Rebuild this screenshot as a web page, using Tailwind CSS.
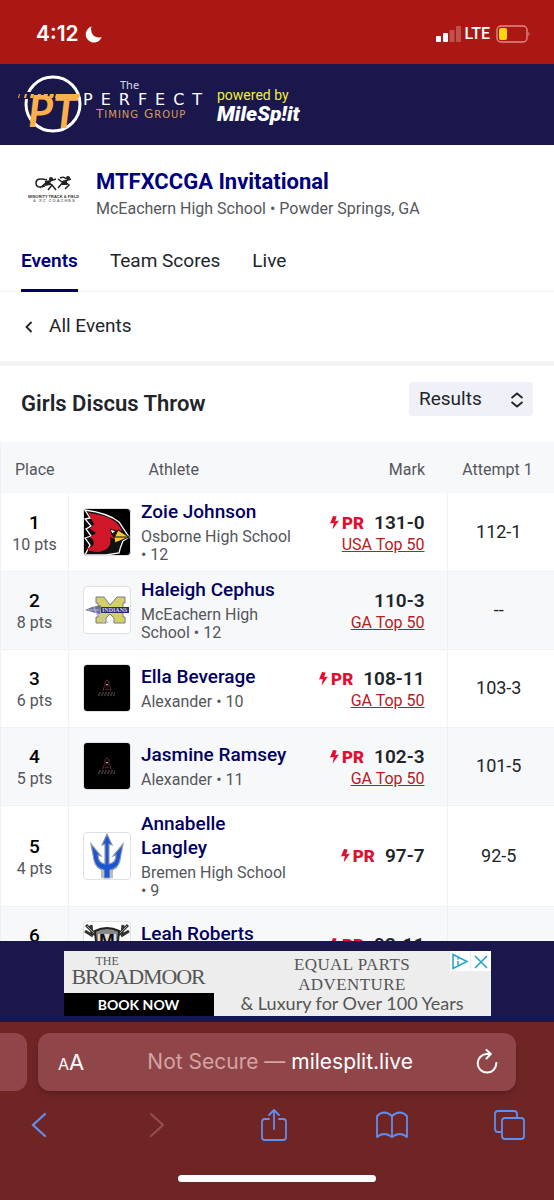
<!DOCTYPE html>
<html lang="en">
<head>
    <meta charset="UTF-8">
    <meta name="viewport" content="width=device-width, initial-scale=1.0">
    <title>Girls Discus Throw - MTFXCCGA Invitational</title>
    <script src="https://cdn.jsdelivr.net/npm/@tailwindcss/browser@4"></script>
</head>
<body class="flex h-screen flex-col overflow-hidden bg-white font-[Roboto,sans-serif] text-[#212529]">

    <!-- Shared icons -->
    <svg class="hidden">
        <symbol id="bolt" viewBox="0 0 9 14">
            <path d="M3 0L0 7.6L3.8 7L2.6 13.6L9 4.6L5.2 5.2L6.6 .4Z" fill="currentColor"/>
        </symbol>
        <symbol id="alexander" viewBox="0 0 46 46">
            <rect width="46" height="46" fill="#000"/>
            <path d="M21 22V17Q23 13 25 17V22M20 22L19 26M26 22L27 26M21 25Q23 23 25 25" fill="none" stroke="#6b2b35"/>
            <path d="M22 19l1 2 1-2z" fill="#ddd"/>
            <path d="M15 28H31M14 30H32" stroke="#4b3b3e" stroke-width="1.5" stroke-dasharray="2 1"/>
        </symbol>
    </svg>

    <!-- Status bar -->
    <div class="flex h-16 shrink-0 items-center justify-between bg-[#ab1813] pt-1 pr-6 pl-9 text-white">
        <div class="flex items-center gap-1.5">
            <span class="font-[Inter,sans-serif] text-[21px] font-semibold">4:12</span>
            <svg class="size-[17px]" viewBox="0 0 17 17"><path d="M6.500 .5A8.200 8.200 0 1 0 16.700 11Q12 12.500 8.500 9.500Q5 6 6.500 .5Z" fill="#fff"/></svg>
        </div>
        <div class="flex items-center gap-1">
            <svg class="h-4 w-[25px]" viewBox="0 0 25 16" fill="#fff">
                <rect y="10" width="5" height="6" rx="1"/>
                <rect x="7" y="7" width="5" height="9" rx="1"/>
                <rect x="13.500" y="4" width="5" height="12" rx="1" opacity=".25"/>
                <rect x="20" width="5" height="16" rx="1" opacity=".25"/>
            </svg>
            <span class="font-[Roboto,sans-serif] text-base leading-5 font-medium">LTE</span>
            <svg class="h-[18px] w-[36px]" viewBox="0 0 36 18">
                <rect x="3" y="1" width="30" height="16" rx="4" fill="none" stroke="#dd8a86" stroke-width="1.400"/>
                <rect x="5" y="3" width="8" height="12" rx="2" fill="#ffd60a"/>
                <path d="M34.500 6.500Q36.500 9 34.500 11.500Z" fill="#dd8a86"/>
            </svg>
        </div>
    </div>

    <!-- Brand header -->
    <header class="flex h-[81px] shrink-0 items-center bg-[#1a174d] pl-4">
        <svg class="h-[62px] w-[197px]" viewBox="0 0 197 62" role="img" aria-label="The Perfect Timing Group">
            <circle cx="37" cy="30" r="27" fill="none" stroke="#fff" stroke-width="3"/>
            <path d="M2 18H30V25H2Z" fill="#1a174d"/>
            <g font-family="Lato" font-weight="bold" font-style="italic" fill="#fbb04b">
                <text x="12" y="53" font-size="43">P</text>
                <text x="37" y="54" font-size="43">T</text>
            </g>
            <path d="M3 20h1l-1 4h-1zM9 20h2l-1 4h-2zM15 20h3l-1 4h-3zM22 20h3l-1 4h-3zM28 20h4l-1 4h-4zM34 20h4l-1 4h-4zM40 20H64L63 24H39Z" fill="#fbb04b"/>
            <text x="104" y="15" font-family="Noto Sans" font-size="11" fill="#d8d8ea">The</text>
            <text x="67" y="31" font-family="DejaVu Sans" font-size="16" letter-spacing="8" fill="#fff">PERFECT</text>
            <text x="80" y="44" font-family="DejaVu Sans" font-size="12" letter-spacing="1" fill="#dd9a56">T<tspan font-size="10">IMING</tspan> G<tspan font-size="10">ROUP</tspan></text>
        </svg>
        <div class="ml-1">
            <p class="text-sm leading-[18px] text-[#f2ef3b]">powered by</p>
            <p class="text-[21px] leading-5 font-black text-white italic">MileSp!it</p>
        </div>
    </header>

    <main class="min-h-0 flex-1 overflow-hidden">
        <!-- Meet title -->
        <section class="flex h-[86px] items-center gap-4 px-7 pt-3.5">
            <svg class="h-12 w-[52px] shrink-0" viewBox="0 0 52 48">
                <g fill="none" stroke="#222" stroke-width="1.500">
                    <path d="M19 9Q8 6 8 12Q8 18 17 15M12 17L19 11L24 14L20 19M22 10L28 8M24 14L28 19M30 17L36 10L41 14L37 18M34 11L30 8M37 10L43 8M32 7Q36 5 38 8"/>
                </g>
                <path d="M17 10L23 9L22 14L17 15ZM34 10L39 9L39 14L34 14Z" fill="#222"/>
                <circle cx="23" cy="8" r="2" fill="#222"/><circle cx="40" cy="7" r="2" fill="#222"/>
                <text x="0" y="27" font-family="Liberation Sans" font-size="4" font-weight="bold" fill="#333">MINORITY TRACK &amp; FIELD</text>
                <text x="5" y="31" font-family="Liberation Sans" font-size="4" font-weight="bold" letter-spacing="1" fill="#777">&amp; XC COACHES</text>
            </svg>
            <div>
                <h1 class="text-[22px] leading-7 font-bold text-[#00007f]">MTFXCCGA Invitational</h1>
                <p class="text-base leading-[26px] text-[#54565b]">McEachern High School • Powder Springs, GA</p>
            </div>
        </section>

        <nav class="flex h-[61px] gap-8 border-b border-[#f0f1f3] px-[21px] text-[19px] leading-7">
            <a href="#" class="-mb-px border-b-3 border-[#00005f] pt-4 font-semibold text-[#00007f]">Events</a>
            <a href="#" class="pt-4">Team Scores</a>
            <a href="#" class="pt-4">Live</a>
        </nav>

        <a href="#" class="flex h-[69px] items-center gap-4 pl-[25px] text-[19px]">
            <svg class="h-3 w-2" viewBox="0 0 8 12"><path d="M6.500 1L1.500 6L6.500 11" fill="none" stroke="#222" stroke-width="1.800"/></svg>
            All Events
        </a>

        <!-- Event heading -->
        <div class="flex h-[81px] items-center justify-between border-t-5 border-[#f3f3f5] px-[21px] pb-0.5">
            <h2 class="text-[22px] font-semibold">Girls Discus Throw</h2>
            <div class="relative mb-2">
                <label for="view" class="sr-only">View</label>
                <select id="view" class="h-[34px] w-[124px] appearance-none rounded bg-[#f0f0f8] pl-2.5 text-[19px] leading-7">
                    <option>Results</option>
                </select>
                <svg class="pointer-events-none absolute top-2.5 right-2 h-4 w-4" viewBox="0 0 16 16"><path d="M2.500 6L8 1.500L13.500 6M2.500 10L8 14.500L13.500 10" fill="none" stroke="#222" stroke-width="1.800"/></svg>
            </div>
        </div>

        <!-- Results -->
        <table class="w-full table-fixed border-l border-[#f0f1f4]">
            <colgroup>
                <col class="w-[68px]">
                <col>
                <col class="w-[150px]">
                <col class="w-[107px]">
            </colgroup>
            <thead class="h-[51px] bg-[#f7f8fa] text-base text-[#54565b]">
                <tr>
                    <th class="pt-1 font-normal">Place</th>
                    <th class="pt-1 pl-20 text-left font-normal">Athlete</th>
                    <th class="pt-1 pr-[22px] text-right font-normal">Mark</th>
                    <th class="pt-1 pr-1.5 font-normal">Attempt 1</th>
                </tr>
            </thead>
            <tbody>
                <tr class="h-[78px] border-b border-[#f0f1f4]">
                    <td class="border-r border-[#f0f1f4] pt-1 text-center">
                        <p class="text-[19px] leading-[22px] font-medium text-black">1</p>
                        <p class="text-base leading-[22px] text-[#54565b]">10 pts</p>
                    </td>
                    <td class="py-1.5 pr-1 pl-3.5">
                        <div class="flex items-center gap-2.5">
                            <svg class="size-12 shrink-0 rounded border border-[#dfe1e5] bg-black" viewBox="0 0 46 46">
                                <path d="M1 1Q24 4 35 13L45 28L39 32Q36 39 35 44L22 46H1L6 36L1 29L7 27L2 20L7 17L1 10L6 9Z" fill="#111" stroke="#fff" stroke-width="1.300"/>
                                <path d="M4 4Q28 6 36 18L38 22L31 21L27 25L32 31L26 28Q29 40 15 43Q4 43 2 39Q12 38 9 31L6 28L12 24L6 20L10 15Z" fill="#cf1729"/>
                                <path d="M34 21L45 28L31 34L30 29Z" fill="#f4c934" stroke="#111"/>
                                <path d="M31 28L44 28" stroke="#111"/>
                                <path d="M26 20L32 22L28 25Z" fill="#fff" stroke="#111"/>
                            </svg>
                            <div>
                                <a href="#" class="block text-[19px] leading-6 font-medium text-[#00005f]">Zoie Johnson</a>
                                <p class="mt-1 text-base leading-[18px] text-[#54565b]">Osborne High School • 12</p>
                            </div>
                        </div>
                    </td>
                    <td class="pt-1 pr-[22px] text-right">
                        <p class="flex items-center justify-end text-[19px] leading-[22px] font-semibold">
                            <span class="mr-2.5 flex items-center gap-[3px] text-[17px] leading-[22px] font-black text-[#e40d2d]"><svg class="h-3.5 w-[9px]"><use href="#bolt"/></svg>PR</span>131-0
                        </p>
                        <a href="#" class="block text-base leading-[22px] text-[#b3201f] underline">USA Top 50</a>
                    </td>
                    <td class="border-l border-[#f0f1f4] pr-1 text-center text-lg">112-1</td>
                </tr>
                <tr class="h-[78px] border-b border-[#f0f1f4] bg-[#f7f8fa]">
                    <td class="border-r border-[#f0f1f4] pt-1 text-center">
                        <p class="text-[19px] leading-[22px] font-medium text-black">2</p>
                        <p class="text-base leading-[22px] text-[#54565b]">8 pts</p>
                    </td>
                    <td class="py-1.5 pr-1 pl-3.5">
                        <div class="flex items-center gap-2.5">
                            <svg class="size-12 shrink-0 rounded border border-[#dfe1e5] bg-white" viewBox="0 0 46 46">
                                <path d="M12 10H20L26 18L33 10H41V16H39V30H41V36H30V31L26 27L22 31V36H12V30H14V16H12Z" fill="#d4d162" stroke="#777a91"/>
                                <path d="M17 20H45V26H17Z" fill="#28296f"/>
                                <path d="M1 23L8 20L17 18L16 27L8 25Z" fill="#6d719a"/>
                                <path d="M4 23H15M10 20L13 28M14 27L20 36M17 27L24 36" stroke="#b9bdd3"/>
                                <text x="18" y="25" font-family="Liberation Serif" font-size="6" font-weight="bold" fill="#d8d9ef">INDIANS</text>
                            </svg>
                            <div>
                                <a href="#" class="block text-[19px] leading-6 font-medium text-[#00005f]">Haleigh Cephus</a>
                                <p class="mt-1 text-base leading-[18px] text-[#54565b]">McEachern High School • 12</p>
                            </div>
                        </div>
                    </td>
                    <td class="pt-1 pr-[22px] text-right">
                        <p class="text-[19px] leading-[22px] font-semibold">110-3</p>
                        <a href="#" class="block text-base leading-[22px] text-[#b3201f] underline">GA Top 50</a>
                    </td>
                    <td class="border-l border-[#f0f1f4] pr-1 text-center text-lg">--</td>
                </tr>
                <tr class="h-[78px] border-b border-[#f0f1f4]">
                    <td class="border-r border-[#f0f1f4] pt-1 text-center">
                        <p class="text-[19px] leading-[22px] font-medium text-black">3</p>
                        <p class="text-base leading-[22px] text-[#54565b]">6 pts</p>
                    </td>
                    <td class="py-1.5 pr-1 pl-3.5">
                        <div class="flex items-center gap-2.5">
                            <svg class="size-12 shrink-0 rounded border border-[#dfe1e5]"><use href="#alexander"/></svg>
                            <div>
                                <a href="#" class="block text-[19px] leading-6 font-medium text-[#00005f]">Ella Beverage</a>
                                <p class="mt-1 text-base leading-[18px] text-[#54565b]">Alexander • 10</p>
                            </div>
                        </div>
                    </td>
                    <td class="pt-1 pr-[22px] text-right">
                        <p class="flex items-center justify-end text-[19px] leading-[22px] font-semibold">
                            <span class="mr-2.5 flex items-center gap-[3px] text-[17px] leading-[22px] font-black text-[#e40d2d]"><svg class="h-3.5 w-[9px]"><use href="#bolt"/></svg>PR</span>108-11
                        </p>
                        <a href="#" class="block text-base leading-[22px] text-[#b3201f] underline">GA Top 50</a>
                    </td>
                    <td class="border-l border-[#f0f1f4] pr-1 text-center text-lg">103-3</td>
                </tr>
                <tr class="h-[78px] border-b border-[#f0f1f4] bg-[#f7f8fa]">
                    <td class="border-r border-[#f0f1f4] pt-1 text-center">
                        <p class="text-[19px] leading-[22px] font-medium text-black">4</p>
                        <p class="text-base leading-[22px] text-[#54565b]">5 pts</p>
                    </td>
                    <td class="py-1.5 pr-1 pl-3.5">
                        <div class="flex items-center gap-2.5">
                            <svg class="size-12 shrink-0 rounded border border-[#dfe1e5]"><use href="#alexander"/></svg>
                            <div>
                                <a href="#" class="block text-[19px] leading-6 font-medium text-[#00005f]">Jasmine Ramsey</a>
                                <p class="mt-1 text-base leading-[18px] text-[#54565b]">Alexander • 11</p>
                            </div>
                        </div>
                    </td>
                    <td class="pt-1 pr-[22px] text-right">
                        <p class="flex items-center justify-end text-[19px] leading-[22px] font-semibold">
                            <span class="mr-2.5 flex items-center gap-[3px] text-[17px] leading-[22px] font-black text-[#e40d2d]"><svg class="h-3.5 w-[9px]"><use href="#bolt"/></svg>PR</span>102-3
                        </p>
                        <a href="#" class="block text-base leading-[22px] text-[#b3201f] underline">GA Top 50</a>
                    </td>
                    <td class="border-l border-[#f0f1f4] pr-1 text-center text-lg">101-5</td>
                </tr>
                <tr class="h-[78px] border-b border-[#f0f1f4]">
                    <td class="border-r border-[#f0f1f4] pt-1 text-center">
                        <p class="text-[19px] leading-[22px] font-medium text-black">5</p>
                        <p class="text-base leading-[22px] text-[#54565b]">4 pts</p>
                    </td>
                    <td class="py-1.5 pr-1 pl-3.5">
                        <div class="flex items-center gap-2.5">
                            <svg class="size-12 shrink-0 rounded border border-[#dfe1e5] bg-white" viewBox="0 0 46 46">
                                <path d="M23 1L28 12L25 11V31Q32 30 32 22L29 23L39 11L36 27Q34 36 26 37V45H20V37Q12 36 10 27L7 11L17 23L14 22Q14 30 21 31V11L18 12Z" fill="#1b55d6" stroke="#8f979f" stroke-width="1.200"/>
                                <path d="M18 37V45M28 37V45" stroke="#9aa4b5" stroke-width="1.500"/>
                            </svg>
                            <div>
                                <a href="#" class="block text-[19px] leading-6 font-medium text-[#00005f]">Annabelle Langley</a>
                                <p class="mt-1 text-base leading-[18px] text-[#54565b]">Bremen High School • 9</p>
                            </div>
                        </div>
                    </td>
                    <td class="pr-[22px] text-right">
                        <p class="flex items-center justify-end text-[19px] leading-[22px] font-semibold">
                            <span class="mr-2.5 flex items-center gap-[3px] text-[17px] leading-[22px] font-black text-[#e40d2d]"><svg class="h-3.5 w-[9px]"><use href="#bolt"/></svg>PR</span>97-7
                        </p>
                    </td>
                    <td class="border-l border-[#f0f1f4] pr-1 text-center text-lg">92-5</td>
                </tr>
                <tr class="h-[78px] border-b border-[#f0f1f4] bg-[#f7f8fa]">
                    <td class="border-r border-[#f0f1f4] pt-1 text-center">
                        <p class="text-[19px] leading-[22px] font-medium text-black">6</p>
                        <p class="text-base leading-[22px]">&nbsp;</p>
                    </td>
                    <td class="py-1.5 pr-1 pl-3.5">
                        <div class="flex items-center gap-2.5">
                            <svg class="size-12 shrink-0 rounded border border-[#dfe1e5] bg-white" viewBox="0 0 46 46">
                                <path d="M2 3L16 17M1 9L9 14M7 3L8 12M44 3L30 17M45 9L37 14M39 3L38 12" stroke="#333" stroke-width="3"/>
                                <path d="M3 4L15 16M43 4L31 16" stroke="#aaa"/>
                                <path d="M11 9Q23 3 35 9L33 30H13Z" fill="#888" stroke="#222" stroke-width="2"/>
                                <path d="M14 12H32V28H14Z" fill="#ddd"/>
                                <text x="15" y="25" font-family="Liberation Sans" font-size="19" font-weight="bold" fill="#111">M</text>
                            </svg>
                            <div>
                                <a href="#" class="block text-[19px] leading-6 font-medium text-[#00005f]">Leah Roberts</a>
                                <p class="mt-1 text-base leading-[18px]">&nbsp;</p>
                            </div>
                        </div>
                    </td>
                    <td class="pr-[22px] text-right">
                        <p class="flex items-center justify-end text-[19px] leading-[22px] font-semibold">
                            <span class="mr-2.5 flex items-center gap-[3px] text-[17px] leading-[22px] font-black text-[#e40d2d]"><svg class="h-3.5 w-[9px]"><use href="#bolt"/></svg>PR</span>92-11
                        </p>
                    </td>
                    <td class="border-l border-[#f0f1f4]"></td>
                </tr>
            </tbody>
        </table>
    </main>

    <!-- Sticky ad -->
    <aside class="flex h-[81px] shrink-0 justify-center bg-[#1a174d] pt-2.5">
        <div class="relative flex h-[65px] w-[427px] bg-[#ededed] text-[#555]">
            <div class="flex w-[150px] flex-col">
                <div class="flex-1 pl-2 font-[Liberation_Serif,serif]">
                    <p class="pt-1 pl-6 text-xs leading-3">THE</p>
                    <p class="text-[22px] leading-5 tracking-tighter">BROADMOOR</p>
                </div>
                <button class="h-[23px] bg-black font-[Lato,sans-serif] text-sm leading-5 font-bold text-white">BOOK NOW</button>
            </div>
            <div class="flex-1 text-center font-[Liberation_Serif,serif] text-[17px] leading-5 tracking-wide">
                <p class="pt-1">EQUAL PARTS</p>
                <p>ADVENTURE</p>
                <p class="font-[Lato,sans-serif] text-lg leading-4 tracking-normal">&amp; Luxury for Over 100 Years</p>
            </div>
            <div class="absolute top-0 right-0 flex gap-px">
                <button aria-label="Ad choices" class="bg-white"><svg class="size-5" viewBox="0 0 20 20" fill="none" stroke="#20a5c9" stroke-width="1.500"><path d="M3 3.500L17 10.500L3 17.500Z"/><path d="M8 10V14M8 7V8.500"/></svg></button>
                <button aria-label="Close ad" class="bg-white"><svg class="size-5" viewBox="0 0 20 20" fill="none" stroke="#20a5c9" stroke-width="1.600"><path d="M4 5L16 17M16 5L4 17"/></svg></button>
            </div>
        </div>
    </aside>

    <!-- Browser toolbar -->
    <footer class="flex h-[178px] shrink-0 flex-col bg-[#702525] pt-[11px]">
        <div class="flex h-[58px] gap-[11px] pr-[38px]">
            <div class="w-[27px] rounded-r-xl bg-[#904648]"></div>
            <div class="flex flex-1 items-center justify-between rounded-xl bg-[#904648] pr-[18px] pl-5 font-[Inter,sans-serif] text-white shadow-md shadow-black/15">
                <button aria-label="Page settings"><span class="text-base">A</span><span class="text-[22px]">A</span></button>
                <p class="text-[21px] text-[#d3a3a4]">Not Secure — <span class="text-white">milesplit.live</span></p>
                <button aria-label="Reload">
                    <svg class="h-[26px] w-[22px]" viewBox="0 0 22 26" fill="none" stroke="#fff" stroke-width="2" stroke-linecap="round" stroke-linejoin="round"><path d="M14.500 5H11A9.300 9.300 0 1 0 20.300 14M10.500 1L14.800 5L10.500 9.500"/></svg>
                </button>
            </div>
        </div>
        <div class="flex h-[68px] items-center justify-between pr-[29px] pl-[23px] text-[#5f8ff0]">
            <button aria-label="Back" class="flex w-8 justify-center"><svg class="h-[26px] w-4" viewBox="0 0 16 26" fill="none" stroke="currentColor" stroke-width="2.200" stroke-linecap="round"><path d="M14 2L2 13L14 24"/></svg></button>
            <button aria-label="Forward" class="flex w-8 justify-center text-[#945052]"><svg class="h-[26px] w-4" viewBox="0 0 16 26" fill="none" stroke="currentColor" stroke-width="2" stroke-linecap="round"><path d="M2 2L14 13L2 24"/></svg></button>
            <button aria-label="Share" class="flex w-8 justify-center"><svg class="h-[34px] w-7" viewBox="0 0 28 34" fill="none" stroke="currentColor" stroke-width="1.800" stroke-linecap="round" stroke-linejoin="round"><path d="M9 11H5Q2 11 2 14V29Q2 32 5 32H23Q26 32 26 29V14Q26 11 23 11H19M14 21V2M9 7L14 2L19 7"/></svg></button>
            <button aria-label="Bookmarks" class="flex w-8 justify-center"><svg class="h-7 w-8" viewBox="0 0 32 28" fill="none" stroke="currentColor" stroke-width="1.800" stroke-linejoin="round"><path d="M16 5Q8-2 1 5V26Q8 20 16 26Q24 20 31 26V5Q24-2 16 5V26"/></svg></button>
            <button aria-label="Tabs" class="flex w-8 justify-center"><svg class="h-[30px] w-[31px]" viewBox="0 0 31 30" fill="none" stroke="currentColor" stroke-width="1.800"><path d="M8 22H4Q1 22 1 19V4Q1 1 4 1H20Q23 1 23 4V8"/><rect x="8" y="8" width="22" height="21" rx="3"/></svg></button>
        </div>
        <div class="mx-auto mt-4 h-[7px] w-[198px] rounded-full bg-white"></div>
    </footer>

</body>
</html>
